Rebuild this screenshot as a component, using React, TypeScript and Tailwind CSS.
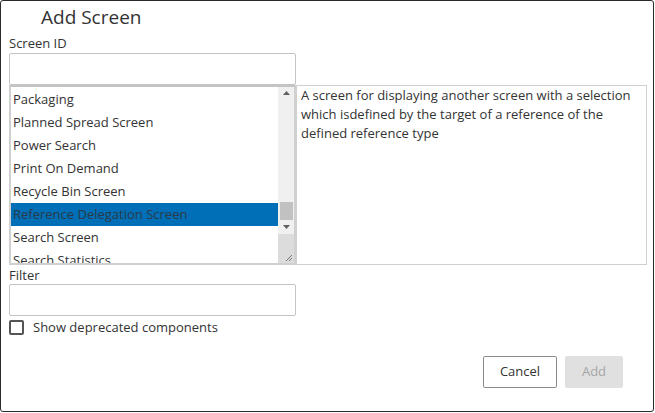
import { useState } from "react";

const items = [
  "Packaging",
  "Planned Spread Screen",
  "Power Search",
  "Print On Demand",
  "Recycle Bin Screen",
  "Reference Delegation Screen",
  "Search Screen",
  "Search Statistics",
];

const App = () => {
  const [selected, setSelected] = useState("Reference Delegation Screen");

  return (
    <div className="w-[655px] h-[413px] bg-white font-['Open_Sans',sans-serif] text-[#333]">
      <div className="w-[654px] h-[412px] border border-[#2b2b2b] rounded-[3px] flex flex-col">
        <h1 className="pl-[40px] pt-[3px] h-[33px] text-[19px] leading-[26px] text-[#333]">Add Screen</h1>

        <div className="pl-[8px] flex flex-col">
          <label className="text-[13px] leading-[19px] h-[19px]">Screen ID</label>
          <input className="w-[287px] h-[32px] border border-[#c4c4c4] rounded-[2px] outline-none px-2 text-[13px]" />

          <div className="flex h-[180px]">
            <div className="w-[287px] h-[180px] border-2 border-[#d0d0d0] border-t-[#c4c4c4] flex bg-white">
              <div className="flex-1 overflow-hidden pt-[1px]">
                {items.map((it) => (
                  <div
                    key={it}
                    onClick={() => setSelected(it)}
                    className={`h-[23px] leading-[23px] pl-[2px] text-[13px] whitespace-nowrap cursor-default ${
                      it === selected ? "bg-[#006fb7] text-[#2a3a48]" : "text-[#333]"
                    }`}
                  >
                    {it}
                  </div>
                ))}
              </div>
              <div className="w-[16px] bg-[#f0f0f0] flex flex-col items-center">
                <div className="h-[12px] flex items-center justify-center">
                  <svg width="7" height="4" viewBox="0 0 7 4"><path d="M0 4 L3.5 0 L7 4 Z" fill="#606060" /></svg>
                </div>
                <div className="h-[103px]" />
                <div className="w-[13px] h-[18px] bg-[#c1c1c1]" />
                <div className="h-[14px] flex items-center justify-center">
                  <svg width="7" height="4" viewBox="0 0 7 4"><path d="M0 0 L3.5 4 L7 0 Z" fill="#606060" /></svg>
                </div>
                <div className="flex-1 w-full bg-[#dcdcdc] flex items-end justify-end pr-[1px] pb-[1px]">
                  <svg width="10" height="10" viewBox="0 0 10 10">
                    <path d="M9 3 L3 9 M9 6 L6 9" stroke="#777" strokeWidth="1" />
                  </svg>
                </div>
              </div>
            </div>
            <div className="w-[351px] h-[180px] border border-[#d0d0d0] px-[4px] pt-[0px] text-[13px] leading-[19px]">
              A screen for displaying another screen with a selection which isdefined by the target of a reference of
              the defined reference type
            </div>
          </div>

          <label className="text-[13px] leading-[18px] h-[18px] mt-[1px]">Filter</label>
          <input className="w-[287px] h-[32px] border border-[#c4c4c4] rounded-[2px] outline-none px-2 text-[13px]" />

          <label className="flex items-center gap-[9px] mt-[3px] h-[16px]">
            <span className="w-[15px] h-[15px] border-2 border-[#555] rounded-[2px] bg-white" />
            <span className="text-[13px] leading-[16px]">Show deprecated components</span>
          </label>
        </div>

        <div className="flex justify-end gap-[8px] pr-[30px] mt-[21px]">
          <button className="w-[74px] h-[32px] border border-[#8a8a8a] rounded-[2px] bg-white text-[13px] text-[#333]">
            Cancel
          </button>
          <button disabled className="w-[58px] h-[32px] rounded-[2px] bg-[#e0e0e0] text-[13px] text-[#a6a6a6]">
            Add
          </button>
        </div>
      </div>
    </div>
  );
};

export default App;
